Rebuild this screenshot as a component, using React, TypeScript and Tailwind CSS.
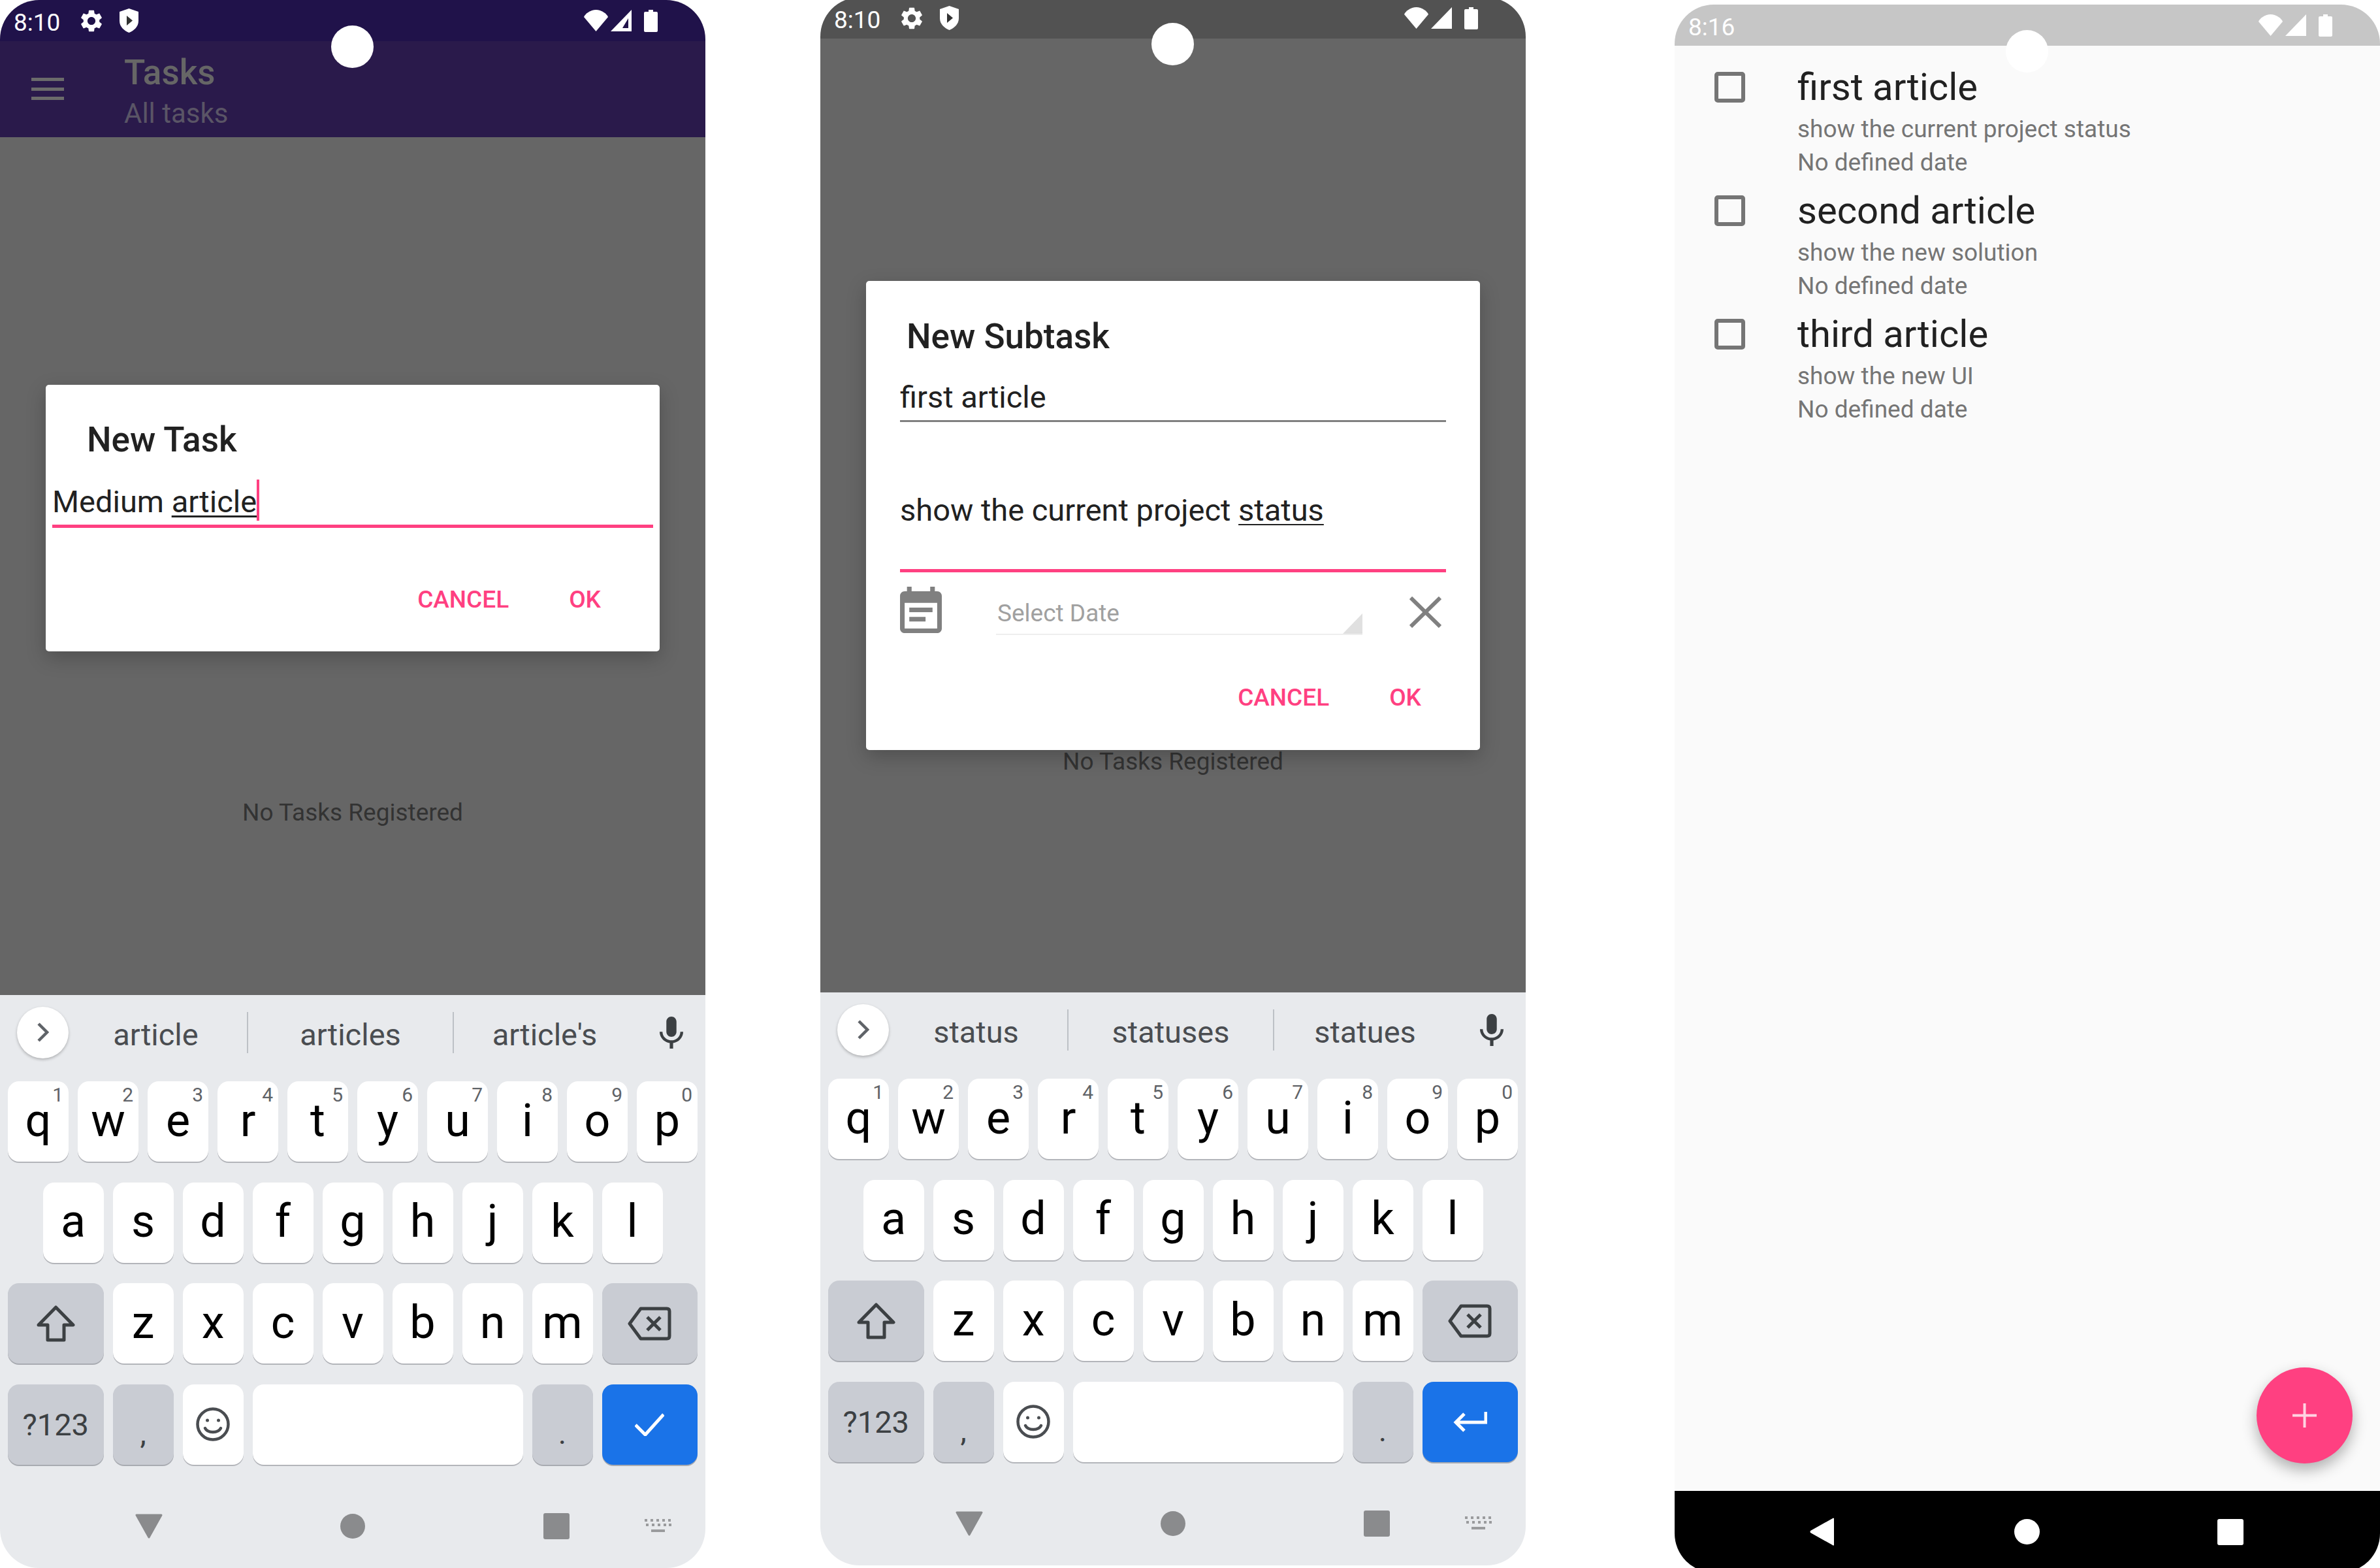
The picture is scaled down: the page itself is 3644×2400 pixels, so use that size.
import type { ReactNode } from "react";

const ROW_ONE = [
  ["q", "1"],
  ["w", "2"],
  ["e", "3"],
  ["r", "4"],
  ["t", "5"],
  ["y", "6"],
  ["u", "7"],
  ["i", "8"],
  ["o", "9"],
  ["p", "0"],
];
const ROW_TWO = ["a", "s", "d", "f", "g", "h", "j", "k", "l"];
const ROW_THREE = ["z", "x", "c", "v", "b", "n", "m"];

const GEAR =
  "M19.14 12.94c.04-.3.06-.61.06-.94 0-.32-.02-.64-.07-.94l2.03-1.58c.18-.14.23-.41.12-.61l-1.92-3.32c-.12-.22-.37-.29-.59-.22l-2.39.96c-.5-.38-1.03-.7-1.62-.94l-.36-2.54c-.04-.24-.24-.41-.48-.41h-3.84c-.24 0-.43.17-.47.41l-.36 2.54c-.59.24-1.13.57-1.62.94l-2.39-.96c-.22-.08-.47 0-.59.22L2.74 8.87c-.12.21-.08.47.12.61l2.03 1.58c-.05.3-.09.63-.09.94s.02.64.07.94l-2.03 1.58c-.18.14-.23.41-.12.61l1.92 3.32c.12.22.37.29.59.22l2.39-.96c.5.38 1.03.7 1.62.94l.36 2.54c.05.24.24.41.48.41h3.84c.24 0 .44-.17.47-.41l.36-2.54c.59-.24 1.13-.56 1.62-.94l2.39.96c.22.08.47 0 .59-.22l1.92-3.32c.12-.22.07-.47-.12-.61l-2.01-1.58zM12 15.6c-1.98 0-3.6-1.62-3.6-3.6s1.62-3.6 3.6-3.6 3.6 1.62 3.6 3.6-1.62 3.6-3.6 3.6z";

function Hole() {
  return <div className="absolute left-[507px] top-[39px] z-20 h-[65px] w-[65px] rounded-full bg-white" />;
}

function StatusBar({ time, bg, extras, hollow }: { time: string; bg: string; extras?: boolean; hollow?: boolean }) {
  return (
    <div className={`flex h-[63px] shrink-0 items-center text-white ${bg}`}>
      <span className="ml-[21px] mt-[6px] w-[71px] text-[37px] leading-none">{time}</span>
      {extras && (
        <>
          <svg viewBox="2 2 20 20" className="ml-[30px] h-[34px] w-[36px]" fill="white">
            <path d={GEAR} />
          </svg>
          <svg viewBox="0 0 29 37" className="ml-[25px] h-[37px] w-[29px]">
            <path d="M14.5 0 L29 5 V19 C29 28 22 34 14.5 37 C7 34 0 28 0 19 V5 Z" fill="white" />
            <path d="M11 11 L20 18.5 L11 26 Z" fill="#333" />
          </svg>
        </>
      )}
      <div className="ml-auto mr-[73px] flex items-center">
        <svg viewBox="0 0 39 33" className="h-[33px] w-[39px]" fill="white">
          <path d="M19.5 33 L1 11 C3 6 11 0 19.5 0 C28 0 36 6 38 11 Z" />
        </svg>
        <svg viewBox="0 0 32 33" className="ml-[3px] h-[33px] w-[32px]">
          <path d="M32 0 V33 H0 Z" fill="white" />
          {hollow && <path d="M27 13 V28 H18 Z" fill="#20124a" />}
        </svg>
        <svg viewBox="0 0 21 34" className="ml-[19px] h-[34px] w-[21px]" fill="white">
          <path d="M7 0 H14 V3 H19 Q21 3 21 5 V32 Q21 34 19 34 H2 Q0 34 0 32 V5 Q0 3 2 3 H7 Z" />
        </svg>
      </div>
    </div>
  );
}

function Key({ label, hint }: { label: string; hint?: string }) {
  return (
    <div className="relative flex h-[123px] w-[93px] items-center justify-center rounded-[17px] bg-white pb-[4px] text-[70px] leading-none text-black shadow-[0_2px_0_#b3b5ba]">
      {label}
      {hint && <span className="absolute right-[8px] top-[6px] text-[30px] leading-none text-[#5f6368]">{hint}</span>}
    </div>
  );
}

function FnKey({ wide, children, className = "" }: { wide?: boolean; children: ReactNode; className?: string }) {
  return (
    <div
      className={`flex h-[123px] items-center justify-center rounded-[17px] bg-[#c9ccd3] text-[#3c4043] shadow-[0_2px_0_#a8abb1] ${
        wide ? "w-[146.5px]" : "w-[93px]"
      } ${className}`}
    >
      {children}
    </div>
  );
}

function Keyboard({ words, enter }: { words: string[]; enter: "check" | "return" }) {
  return (
    <div className="flex h-[877px] shrink-0 flex-col bg-[#e8eaed]">
      <div className="mb-[18px] flex h-[114px] shrink-0 items-center pl-[26px]">
        <div className="flex h-[79px] w-[79px] items-center justify-center rounded-full bg-white shadow-[0_2px_4px_rgba(0,0,0,0.25)]">
          <svg viewBox="0 0 18 30" className="h-[30px] w-[18px]" fill="none" stroke="#5f6368" strokeWidth="4.5">
            <path d="M2 2 L15 15 L2 28" />
          </svg>
        </div>
        <div className="flex w-[273px] justify-center pr-[6px] pt-[6px] text-[47px] leading-none text-[#4a4d51]">{words[0]}</div>
        <div className="h-[63px] w-[2px] bg-[#bdc1c6]" />
        <div className="flex w-[313px] justify-center pt-[6px] text-[47px] leading-none text-[#4a4d51]">{words[1]}</div>
        <div className="h-[63px] w-[2px] bg-[#bdc1c6]" />
        <div className="flex w-[280px] justify-center pr-[2px] pt-[6px] text-[47px] leading-none text-[#4a4d51]">{words[2]}</div>
        <svg viewBox="5 2 14 19" className="ml-[34px] h-[49px] w-[38px]" fill="#3c4043">
          <path d="M12 14c1.66 0 2.99-1.34 2.99-3L15 5c0-1.66-1.34-3-3-3S9 3.34 9 5v6c0 1.66 1.34 3 3 3zm5.3-3c0 3-2.54 5.1-5.3 5.1S6.7 14 6.7 11H5c0 3.41 2.72 6.23 6 6.72V21h2v-3.28c3.28-.48 6-3.3 6-6.72h-1.7z" />
        </svg>
      </div>

      <div className="flex flex-col gap-[31.5px]">
        <div className="flex justify-center gap-[14px]">
          {ROW_ONE.map(([l, n]) => (
            <Key key={l} label={l} hint={n} />
          ))}
        </div>
        <div className="flex justify-center gap-[14px]">
          {ROW_TWO.map((l) => (
            <Key key={l} label={l} />
          ))}
        </div>
        <div className="flex justify-center gap-[14px]">
          <FnKey wide>
            <svg viewBox="0 0 59 56" className="h-[56px] w-[59px]" fill="none" stroke="#3c4043" strokeWidth="5" strokeLinejoin="round">
              <path d="M29.5 3 L56 30 H42 V53 H17 V30 H3 Z" />
            </svg>
          </FnKey>
          {ROW_THREE.map((l) => (
            <Key key={l} label={l} />
          ))}
          <FnKey wide>
            <svg viewBox="0 0 67 52" className="h-[52px] w-[67px]" fill="none" stroke="#3c4043" strokeWidth="5" strokeLinejoin="round">
              <path d="M20 3 H60 Q64 3 64 7 V45 Q64 49 60 49 H20 L3 26 Z" />
              <path d="M30 16 L50 36 M50 16 L30 36" />
            </svg>
          </FnKey>
        </div>
        <div className="flex justify-center gap-[14px]">
          <FnKey wide className="text-[47px] leading-none">
            ?123
          </FnKey>
          <FnKey className="pt-[27px] text-[47px] leading-none">,</FnKey>
          <div className="flex h-[123px] w-[93px] items-center justify-center rounded-[17px] bg-white shadow-[0_2px_0_#b3b5ba]">
            <svg viewBox="0 0 52 52" className="h-[52px] w-[52px]" fill="none" stroke="#4a4d51" strokeWidth="4.5">
              <circle cx="26" cy="26" r="23.5" />
              <circle cx="17.5" cy="20" r="2.5" fill="#4a4d51" stroke="none" />
              <circle cx="34.5" cy="20" r="2.5" fill="#4a4d51" stroke="none" />
              <path d="M14 32 C18 40 34 40 38 32" strokeLinecap="round" />
            </svg>
          </div>
          <div className="h-[123px] w-[414px] rounded-[17px] bg-white shadow-[0_2px_0_#b3b5ba]" />
          <FnKey className="pt-[27px] text-[47px] leading-none">.</FnKey>
          <div className="flex h-[123px] w-[146.5px] items-center justify-center rounded-[17px] bg-[#1a73e8] shadow-[0_2px_0_#a8abb1]">
            {enter === "check" ? (
              <svg viewBox="0 0 45 35" className="h-[35px] w-[45px]" fill="none" stroke="white" strokeWidth="5">
                <path d="M1 18 L16 33 L44 2" />
              </svg>
            ) : (
              <svg viewBox="0 0 52 32" className="h-[32px] w-[52px]" fill="none" stroke="white" strokeWidth="5">
                <path d="M50 1 V17 H5 M17 4 L4 17 L17 30" />
              </svg>
            )}
          </div>
        </div>
      </div>

      <div className="mt-[74px] flex h-[40px] items-center pl-[207px]">
        <svg viewBox="0 0 42 38" className="h-[38px] w-[42px]" fill="#8a8b8d" stroke="#8a8b8d" strokeWidth="3" strokeLinejoin="round">
          <path d="M2 2 H40 L21 36 Z" />
        </svg>
        <div className="ml-[272px] h-[38px] w-[38px] rounded-full bg-[#8a8b8d]" />
        <div className="ml-[273px] h-[40px] w-[40px] rounded-[3px] bg-[#8a8b8d]" />
        <svg viewBox="0 0 41 21" className="ml-[115px] h-[21px] w-[41px]" fill="#9a9b9d">
          <path d="M0 0h4v4H0zM9 0h4v4H9zM18 0h4v4h-4zM27 0h4v4h-4zM36 0h4v4h-4zM2 7h4v4H2zM11 7h4v4h-4zM20 7h4v4h-4zM29 7h4v4h-4zM37 7h4v4h-4zM10 16h21v4H10z" />
        </svg>
      </div>
    </div>
  );
}

function DialogActions() {
  return (
    <div className="flex justify-end gap-[92px] pr-[90px] text-[37px] font-medium leading-none text-[#ff4081]">
      <span>CANCEL</span>
      <span>OK</span>
    </div>
  );
}

function NewTaskPhone() {
  return (
    <div className="relative flex h-[2400px] w-[1080px] shrink-0 flex-col overflow-hidden rounded-[60px]">
      <Hole />
      <StatusBar time="8:10" bg="bg-[#20124a]" extras hollow />
      <div className="flex h-[147px] shrink-0 items-start bg-[#2a1a4b]">
        <div className="ml-[48px] mt-[56px] flex w-[50px] flex-col gap-[9.5px]">
          <div className="h-[5px] bg-[#6b6b6b]" />
          <div className="h-[5px] bg-[#6b6b6b]" />
          <div className="h-[5px] bg-[#6b6b6b]" />
        </div>
        <div className="ml-[92px] pt-[22px]">
          <div className="text-[53px] font-medium leading-none text-[#666666]">Tasks</div>
          <div className="mt-[15px] text-[42px] leading-none text-[#5a5566]">All tasks</div>
        </div>
      </div>
      <div className="flex min-h-0 flex-1 flex-col bg-[#666666] pt-[379px]">
        <div className="relative mx-[70px] h-[408px] rounded-[5px] bg-white shadow-[0_10px_30px_rgba(0,0,0,0.22)]">
          <div className="pl-[63px] pt-[58px] text-[53px] font-medium leading-none text-[#212121]">New Task</div>
          <div className="mt-[44px] flex pl-[10px] text-[47px] leading-none text-[#212121]">
            <span className="whitespace-pre">Medium </span>
            <span className="underline decoration-[3px] underline-offset-[5px]">article</span>
            <span className="-mt-[10px] h-[63px] w-[4px] bg-[#ff4081]" />
          </div>
          <div className="mx-[10px] mt-[6px] h-[5px] bg-[#ff4081]" />
          <div className="mt-[91px]">
            <DialogActions />
          </div>
        </div>
        <div className="mt-[228px] text-center text-[37px] leading-none text-[#333333]">No Tasks Registered</div>
      </div>
      <Keyboard words={["article", "articles", "article's"]} enter="check" />
    </div>
  );
}

function NewSubtaskPhone() {
  return (
    <div className="relative ml-[176px] -mt-[4px] flex h-[2400px] w-[1080px] shrink-0 flex-col overflow-hidden rounded-[60px]">
      <Hole />
      <StatusBar time="8:10" bg="bg-[#525252]" extras />
      <div className="flex min-h-0 flex-1 flex-col bg-[#666666] pt-[371px]">
        <div className="relative mx-[70px] h-[718px] rounded-[5px] bg-white shadow-[0_10px_30px_rgba(0,0,0,0.22)]">
          <div className="pl-[62px] pt-[59px] text-[53px] font-medium leading-none text-[#212121]">New Subtask</div>
          <div className="mx-[52px] mt-[42px] border-b-[3px] border-[#808080] pb-[12px] text-[47px] leading-none text-[#212121]">first article</div>
          <div className="mx-[52px] mt-[111px] border-b-[5px] border-[#ff4081] pb-[67px] text-[47px] leading-none text-[#212121]">
            show the current project <span className="underline decoration-[2px] underline-offset-[5px]">status</span>
          </div>
          <div className="mx-[52px] mt-[22px] flex items-start">
            <svg viewBox="3 1 18 20" preserveAspectRatio="none" className="h-[71px] w-[64px]" fill="#808080">
              <path d="M17 10H7v2h10v-2zm2-7h-1V1h-2v2H8V1H6v2H5c-1.11 0-1.99.9-1.99 2L3 19c0 1.1.89 2 2 2h14c1.1 0 2-.9 2-2V5c0-1.1-.9-2-2-2zm0 16H5V8h14v11zm-5-5H7v2h7v-2z" />
            </svg>
            <div className="relative ml-[83px] flex h-[74px] w-[561px] items-end border-b-[2px] border-[#eeeeee] pb-[13px] pl-[2px] text-[37px] leading-none text-[#a0a0a0]">
              Select Date
              <svg viewBox="0 0 30 31" className="absolute bottom-0 right-0 h-[31px] w-[30px]" fill="#e0e0e0">
                <path d="M30 0 V31 H0 Z" />
              </svg>
            </div>
            <svg viewBox="0 0 49 48" className="ml-[72px] mt-[15px] h-[48px] w-[49px]" fill="none" stroke="#808080" strokeWidth="6">
              <path d="M2 2 L47 46 M47 2 L2 46" />
            </svg>
          </div>
          <div className="mt-[77px]">
            <DialogActions />
          </div>
        </div>
        <div className="-mt-[1px] text-center text-[37px] leading-none text-[#333333]">No Tasks Registered</div>
      </div>
      <Keyboard words={["status", "statuses", "statues"]} enter="return" />
    </div>
  );
}

function TaskRow({ title, description }: { title: string; description: string }) {
  return (
    <div className="flex items-start">
      <div className="ml-[61px] mt-[6px] h-[47px] w-[47px] rounded-[5px] border-[6px] border-[#757575]" />
      <div className="ml-[80px]">
        <div className="text-[58px] leading-none text-[#212121]">{title}</div>
        <div className="mt-[17px] text-[37px] leading-none text-[#757575]">{description}</div>
        <div className="mt-[14px] text-[37px] leading-none text-[#757575]">No defined date</div>
      </div>
    </div>
  );
}

function TaskListPhone() {
  return (
    <div className="relative ml-[228px] mt-[7px] flex h-[2400px] w-[1080px] shrink-0 flex-col overflow-hidden rounded-[60px]">
      <Hole />
      <StatusBar time="8:16" bg="bg-[#c6c6c6]" />
      <div className="relative flex min-h-0 flex-1 flex-col gap-[26px] bg-[#fafafa] pt-[34px]">
        <TaskRow title="first article" description="show the current project status" />
        <TaskRow title="second article" description="show the new solution" />
        <TaskRow title="third article" description="show the new UI" />
        <div className="absolute bottom-[42px] right-[42px] flex h-[147px] w-[147px] items-center justify-center rounded-full bg-[#ff4081] shadow-[0_10px_22px_rgba(0,0,0,0.3)]">
          <svg viewBox="0 0 37 37" className="h-[37px] w-[37px]" fill="#ffd3e2">
            <path d="M16.5 0h4v16.5H37v4H20.5V37h-4V20.5H0v-4h16.5z" />
          </svg>
        </div>
      </div>
      <div className="flex h-[125px] shrink-0 items-center bg-black pl-[207px]">
        <svg viewBox="0 0 37 43" className="h-[43px] w-[37px]" fill="white">
          <path d="M37 1 V42 Q36 43 35 42 L1 23 Q0 21.5 1 20 L35 1 Q36 0 37 1 Z" />
        </svg>
        <div className="ml-[276px] h-[39px] w-[39px] rounded-full bg-white" />
        <div className="ml-[272px] h-[40px] w-[40px] rounded-[3px] bg-white" />
      </div>
    </div>
  );
}

export default function App() {
  return (
    <div className="flex h-[2400px] w-[3644px] items-start overflow-hidden bg-white font-[family-name:Roboto,sans-serif]">
      <NewTaskPhone />
      <NewSubtaskPhone />
      <TaskListPhone />
    </div>
  );
}
